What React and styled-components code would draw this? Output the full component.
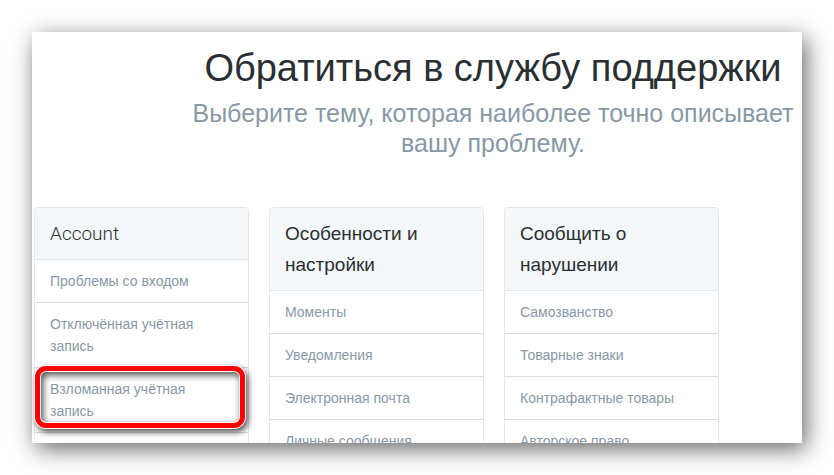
import React from 'react';
import styled, { createGlobalStyle } from 'styled-components';

const topics = [
  {
    title: 'Account',
    light: true,
    links: [
      { text: 'Проблемы со входом' },
      { text: 'Отключённая учётная запись' },
      { text: 'Взломанная учётная запись', marked: true },
    ],
  },
  {
    title: 'Особенности и настройки',
    links: [
      { text: 'Моменты' },
      { text: 'Уведомления' },
      { text: 'Электронная почта' },
      { text: 'Личные сообщения' },
    ],
  },
  {
    title: 'Сообщить о нарушении',
    links: [
      { text: 'Самозванство' },
      { text: 'Товарные знаки' },
      { text: 'Контрафактные товары' },
      { text: 'Авторское право' },
    ],
  },
];

function Topic({ title, light, links }) {
  return (
    <Card>
      <CardTitle $light={light}>{title}</CardTitle>
      <List>
        {links.map((link) => (
          <Item key={link.text}>
            <ItemLink href="#">{link.text}</ItemLink>
            {link.marked && <Marker />}
          </Item>
        ))}
      </List>
    </Card>
  );
}

function App() {
  return (
    <Page>
      <GlobalStyle />
      <Panel>
        <Header>
          <Title>Обратиться в службу поддержки</Title>
          <Subtitle>
            Выберите тему, которая наиболее точно описывает вашу проблему.
          </Subtitle>
        </Header>
        <Topics>
          {topics.map((topic) => (
            <Topic key={topic.title} {...topic} />
          ))}
        </Topics>
      </Panel>
    </Page>
  );
}

const GlobalStyle = createGlobalStyle`
  * {
    box-sizing: border-box;
  }
  body {
    margin: 0;
    background: #fff;
    font-family: 'Liberation Sans', Arial, sans-serif;
  }
`;

const Page = styled.div`
  display: flex;
  height: 100vh;
  padding: 32px;
  overflow: hidden;
`;

const Panel = styled.main`
  flex: 1;
  overflow: hidden;
  background: #fff;
  box-shadow: 4px 6px 22px rgba(0, 0, 0, 0.6);
`;

const Header = styled.header`
  padding: 14px 0 0 152px;
  text-align: center;
`;

const Title = styled.h1`
  margin: 0;
  color: #292f33;
  font-size: 38px;
  font-weight: normal;
  line-height: 44px;
  white-space: nowrap;
`;

const Subtitle = styled.p`
  margin: 8px 0 0;
  color: #8899a6;
  font-size: 25px;
  line-height: 30px;
`;

const Topics = styled.div`
  display: grid;
  grid-template-columns: repeat(3, 1fr);
  gap: 20px;
  padding: 49px 83px 0 2px;
`;

const Card = styled.section`
  border: 1px solid #e1e8ed;
  border-radius: 4px;
`;

const CardTitle = styled.h2`
  margin: 0;
  padding: 10px 15px;
  border-bottom: 1px solid #e1e8ed;
  border-radius: 3px 3px 0 0;
  background: #f5f8fa;
  color: #292f33;
  font-family: ${({ $light }) =>
    $light ? "Roboto, 'Liberation Sans', sans-serif" : 'inherit'};
  font-size: 19px;
  font-weight: ${({ $light }) => ($light ? 300 : 400)};
  line-height: 31px;
`;

const List = styled.ul`
  margin: 0;
  padding: 0;
  list-style: none;
`;

const Item = styled.li`
  position: relative;
  padding: 10px 15px;
  border-bottom: 1px solid #ddd;
  font-size: 14px;
  line-height: 22px;
`;

const ItemLink = styled.a`
  color: #8899a6;
  text-decoration: none;

  &:hover {
    text-decoration: underline;
  }
`;

const Marker = styled.span`
  position: absolute;
  top: -2px;
  right: 3px;
  bottom: 4px;
  left: 0;
  border: 5px solid #f00;
  border-radius: 11px;
  box-shadow:
    0 0 0 1px #fff,
    2px 3px 6px 1px rgba(0, 0, 0, 0.7),
    inset 0 0 0 1px #fff,
    inset 2px 3px 7px 1px rgba(0, 0, 0, 0.7);
  pointer-events: none;
`;

export default App;
